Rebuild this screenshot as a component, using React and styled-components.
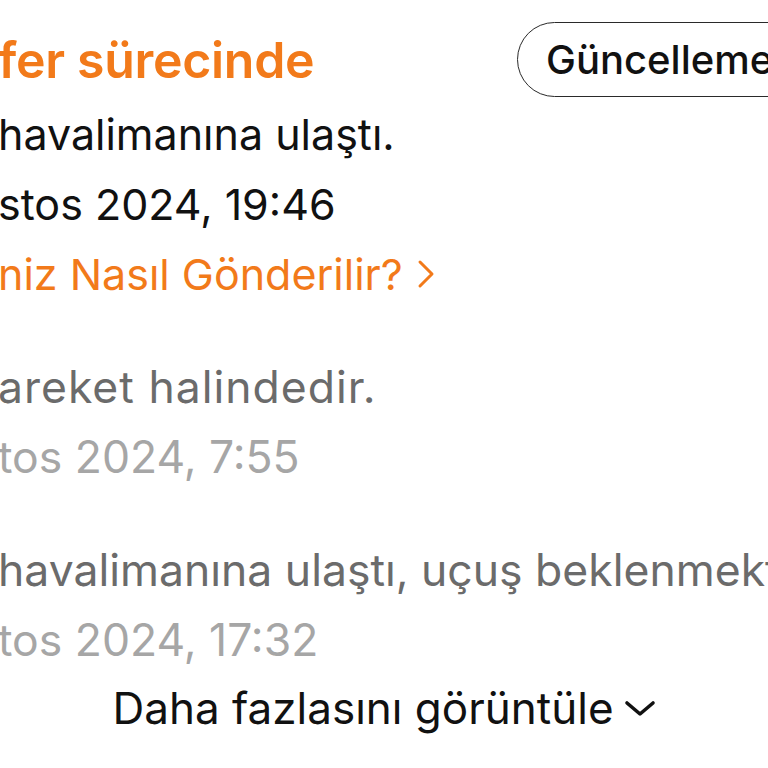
import React from "react";
import styled, { createGlobalStyle } from "styled-components";

const GlobalStyle = createGlobalStyle`
  html, body {
    margin: 0;
    padding: 0;
    background: #ffffff;
    overflow: hidden;
  }
  body {
    font-family: Inter, "Noto Sans", "Liberation Sans", sans-serif;
    -webkit-font-smoothing: antialiased;
  }
`;

const events = [
  { text: "areket halindedir.", date: "tos 2024, 7:55", spacing: 1 },
  { text: "havalimanına ulaştı, uçuş beklenmekte", date: "tos 2024, 17:32", spacing: 0 },
];

function ChevronRight() {
  return (
    <svg width="18" height="30" viewBox="0 0 18 30" fill="none">
      <path
        d="M3 3 L15 15 L3 27"
        stroke="#f27a1a"
        strokeWidth="3"
        strokeLinecap="round"
        strokeLinejoin="round"
      />
    </svg>
  );
}

function ChevronDown() {
  return (
    <svg width="32" height="18" viewBox="0 0 32 18" fill="none">
      <path
        d="M3 4 L16 15 L29 4"
        stroke="#111"
        strokeWidth="3.6"
        strokeLinecap="round"
        strokeLinejoin="round"
      />
    </svg>
  );
}

function App() {
  return (
    <>
      <GlobalStyle />
      <Page>
        <Header>
          <Title>fer sürecinde</Title>
          <UpdateButton>Güncellemeler</UpdateButton>
        </Header>

        <Current>
          <Line>havalimanına ulaştı.</Line>
          <Line>stos 2024, 19:46</Line>
          <LinkLine>
            niz Nasıl Gönderilir?
            <ChevronRight />
          </LinkLine>
        </Current>

        {events.map((ev) => (
          <Event key={ev.date}>
            <GrayLine tone="#6b6b6b" spacing={ev.spacing}>{ev.text}</GrayLine>
            <GrayLine tone="#a6a6a6">{ev.date}</GrayLine>
          </Event>
        ))}

        <MoreButton>
          Daha fazlasını görüntüle
          <ChevronDown />
        </MoreButton>
      </Page>
    </>
  );
}

const Page = styled.div`
  width: 768px;
  height: 768px;
  overflow: hidden;
  display: flex;
  flex-direction: column;
  padding-top: 22px;
  box-sizing: border-box;
`;

const Header = styled.div`
  display: flex;
  align-items: center;
  justify-content: space-between;
  height: 75px;
`;

const Title = styled.h1`
  margin: 0 0 0 -2px;
  font-size: 50px;
  font-weight: 600;
  color: #f27a1a;
  letter-spacing: -0.3px;
  white-space: nowrap;
`;

const UpdateButton = styled.button`
  flex-shrink: 0;
  height: 75px;
  width: 300px;
  margin-right: -49px;
  padding: 0 0 0 28px;
  text-align: left;
  border: 1.5px solid #2a2a2a;
  border-radius: 38px;
  background: #fff;
  font-family: inherit;
  font-size: 40px;
  font-weight: 500;
  color: #111;
  white-space: nowrap;
  overflow: hidden;
`;

const Current = styled.div`
  display: flex;
  flex-direction: column;
  margin-top: 2px;
`;

const Line = styled.div`
  margin-left: -2px;
  font-size: 43px;
  line-height: 70px;
  color: ${(p) => p.tone || "#111"};
  white-space: nowrap;
`;

const GrayLine = styled(Line)`
  font-size: 44.5px;
  letter-spacing: ${(p) => p.spacing || 0}px;
`;

const LinkLine = styled(Line)`
  display: flex;
  align-items: center;
  gap: 14px;
  color: #f27a1a;
`;

const Event = styled.div`
  display: flex;
  flex-direction: column;
  margin-top: 43px;
`;

const MoreButton = styled.div`
  display: flex;
  align-items: center;
  justify-content: center;
  gap: 10px;
  margin-top: -2px;
  font-size: 44px;
  line-height: 70px;
  color: #111;
  white-space: nowrap;
`;

export default App;
